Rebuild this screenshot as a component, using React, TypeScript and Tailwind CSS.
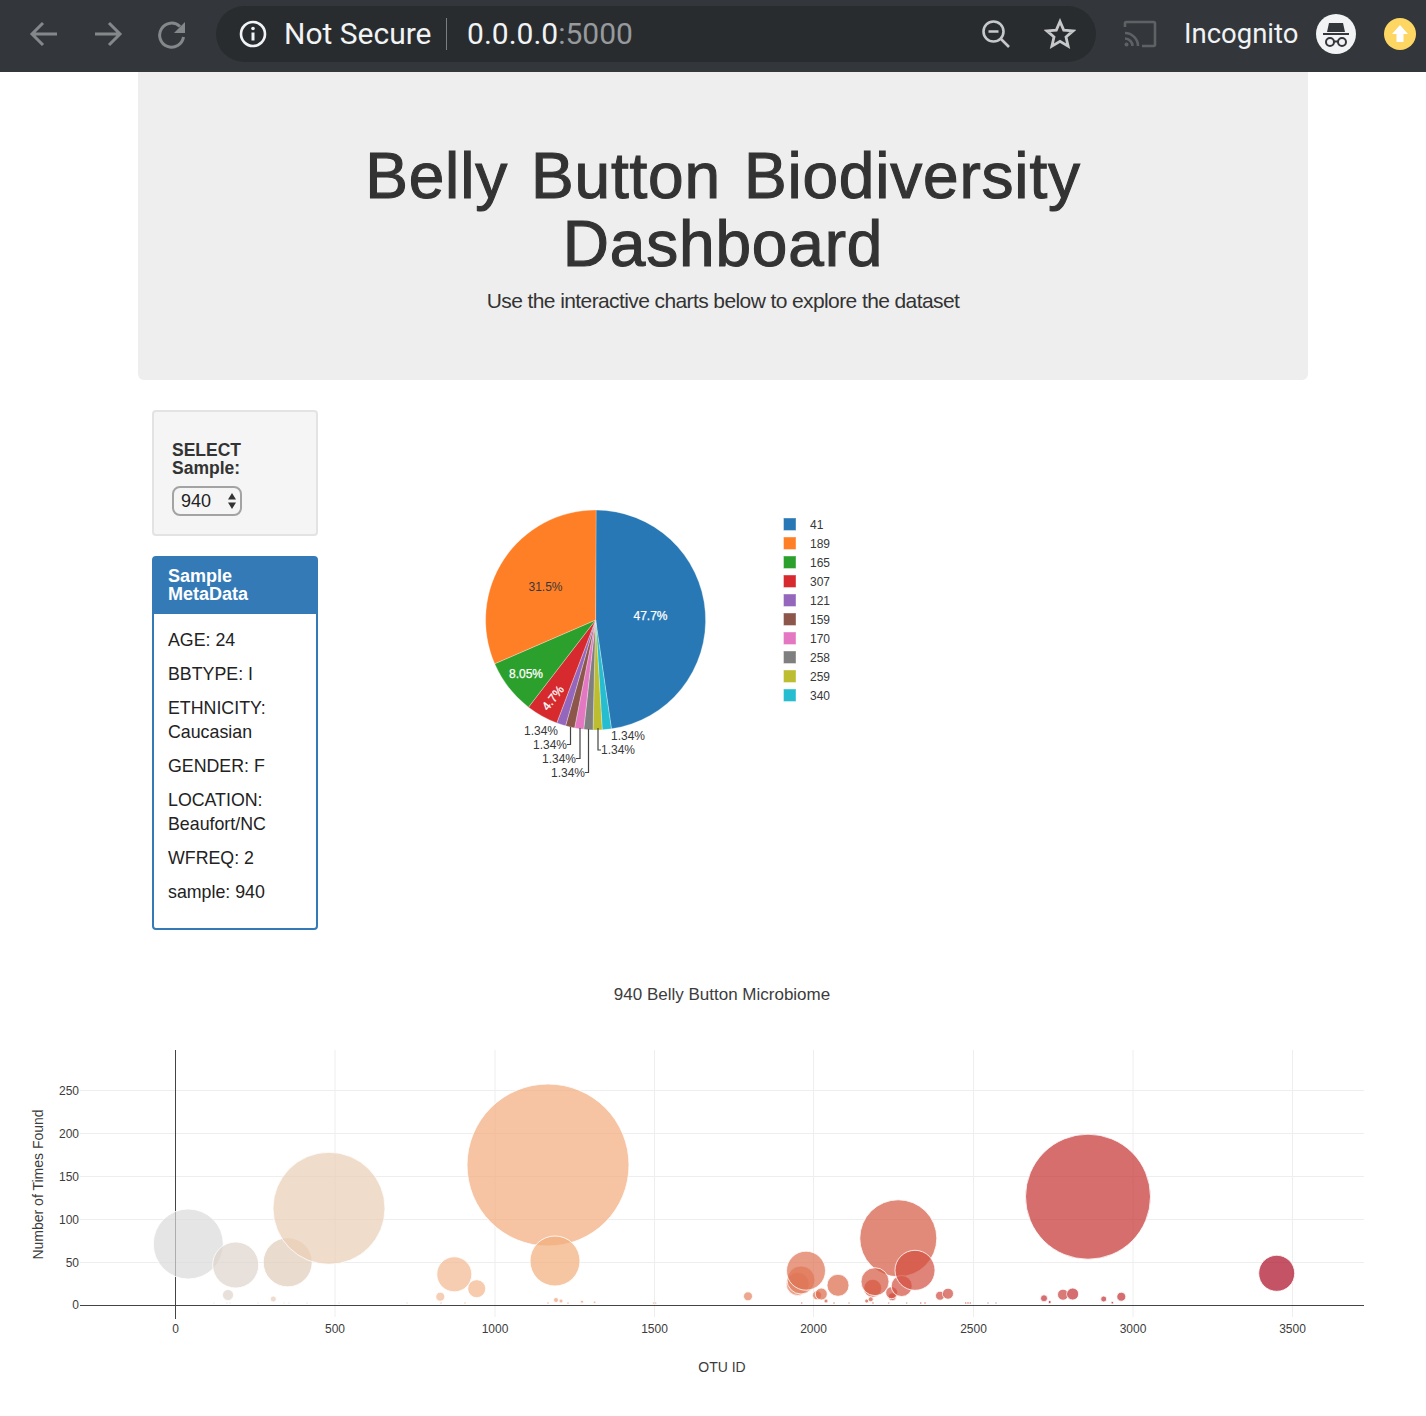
import React from "react";

const sans = "font-['Liberation_Sans',Arial,sans-serif]";

const slices: [number, string][] = [
  [47.7, "#2878b5"],
  [1.34, "#26bdd0"],
  [1.34, "#bcbd30"],
  [1.34, "#7f7f7f"],
  [1.34, "#e377c2"],
  [1.34, "#8c564b"],
  [1.34, "#9467bd"],
  [4.7, "#d62a2e"],
  [8.05, "#2ca02c"],
  [31.6, "#ff7f27"],
];

const legend: [string, string][] = [
  ["41", "#2878b5"],
  ["189", "#ff7f27"],
  ["165", "#2ca02c"],
  ["307", "#d62a2e"],
  ["121", "#9467bd"],
  ["159", "#8c564b"],
  ["170", "#e377c2"],
  ["258", "#7f7f7f"],
  ["259", "#bcbd30"],
  ["340", "#26bdd0"],
];

function slicePaths() {
  const cx = 595.6, cy = 620, r = 110;
  let a = 0;
  return slices.map(([v, c]) => {
    const a0 = a;
    a += (v / 100) * Math.PI * 2;
    const x0 = cx + r * Math.sin(a0), y0 = cy - r * Math.cos(a0);
    const x1 = cx + r * Math.sin(a), y1 = cy - r * Math.cos(a);
    const large = a - a0 > Math.PI ? 1 : 0;
    return { d: `M${cx} ${cy}L${x0} ${y0}A${r} ${r} 0 ${large} 1 ${x1} ${y1}Z`, c };
  });
}

// x, y, r, visible colour
const bubbles: [number, number, number, string][] = [
  [188.3, 1244, 35, "#e5e5e5"],
  [235.7, 1265, 23, "#e8e0da"],
  [228, 1295, 5.5, "#e8e0da"],
  [273.3, 1299, 3, "#eddccf"],
  [287.7, 1262.3, 24.5, "#e9dccf"],
  [329, 1208.3, 56, "#f0dccb"],
  [440.3, 1296.7, 4.5, "#f6cdb5"],
  [454.3, 1274.3, 17.5, "#f6cdb0"],
  [476.7, 1288.7, 9, "#f6cbae"],
  [548, 1165, 81, "#f6c4a3"],
  [555, 1261, 25, "#f6c6a3"],
  [556, 1300, 2.5, "#f4bda0"],
  [561, 1301, 2, "#f4bda0"],
  [582, 1301.7, 1.5, "#f2b59a"],
  [594.7, 1302.3, 1.2, "#f2b59a"],
  [748, 1296.3, 4.5, "#eea78f"],
  [797.7, 1284, 11.5, "#eaa48e"],
  [801, 1280, 14, "#eaa48e"],
  [806, 1270.7, 19.5, "#e89c85"],
  [838, 1285.3, 11, "#e6957f"],
  [817, 1295.3, 4.5, "#e89880"],
  [821.3, 1294, 6, "#e6957f"],
  [826, 1301, 2, "#e08a78"],
  [898.3, 1238.3, 38.5, "#e28b7b"],
  [872.7, 1288.3, 9, "#e28b7b"],
  [875, 1281.7, 14, "#e28b7b"],
  [866.7, 1301, 2, "#e28b7b"],
  [870.7, 1299.3, 2.5, "#e28b7b"],
  [892.3, 1296.7, 4, "#dd7a70"],
  [891.7, 1292.7, 6, "#e08478"],
  [901.7, 1286, 10.5, "#e08478"],
  [915, 1270.3, 20, "#e08478"],
  [940, 1295.7, 4.5, "#dd8078"],
  [948, 1293.7, 5.5, "#dd8078"],
  [1044, 1298.3, 3.5, "#d56f70"],
  [1049.7, 1302, 1.5, "#d05060"],
  [1063, 1294.7, 5.5, "#d97a78"],
  [1072.7, 1294, 6, "#d56f70"],
  [1088, 1196.7, 62.5, "#d66f6f"],
  [1103.7, 1299, 3, "#d56f70"],
  [1112.3, 1302.7, 1.2, "#d05060"],
  [1121.3, 1296.7, 4.5, "#d56f70"],
  [1276.7, 1273.3, 18, "#c45566"],
];

const tiny: [number, string][] = [
  [214, "#f4ece6"], [227, "#f4ece6"], [230, "#f4ece6"], [258, "#f4ece6"], [284, "#f4ece6"], [289, "#f4ece6"],
  [307, "#f6e6da"], [339, "#f6e6da"], [407, "#f8dcc8"], [441, "#f6cdb0"], [465, "#f6cdb0"], [548, "#f4bda0"],
  [568, "#f4bda0"], [653.5, "#f0c0aa"], [655.7, "#f0c0aa"], [801.7, "#e89880"], [834, "#e6957f"], [849, "#ecb0a0"],
  [873, "#e28b7b"], [888.7, "#e8a596"], [906.7, "#e8a090"], [920.7, "#e08478"], [925, "#e08478"], [965.7, "#dd8078"],
  [968, "#dd8078"], [970.3, "#dd8078"], [988, "#e8a8a0"], [996, "#e8a8a0"],
];

// Bubbles are 70% opaque; turn the colour seen on white into the colour to paint.
function solid(hex: string) {
  const n = parseInt(hex.slice(1), 16);
  const f = (v: number) => Math.max(0, Math.round((v - 255 * 0.3) / 0.7));
  return `rgb(${f((n >> 16) & 255)},${f((n >> 8) & 255)},${f(n & 255)})`;
}

function Toolbar() {
  return (
    <div className="flex h-[72px] items-center bg-[#33373b] pb-[4px] font-['Roboto',sans-serif]">
      <svg className="ml-[29px] shrink-0" width="30" height="28" viewBox="0 0 30 28" fill="none" stroke="#85888b" strokeWidth="3">
        <path d="M28 14H4M14 3 3 14l11 11" />
      </svg>
      <svg className="ml-[34px] shrink-0" width="30" height="28" viewBox="0 0 30 28" fill="none" stroke="#85888b" strokeWidth="3">
        <path d="M2 14h24M16 3l11 11-11 11" />
      </svg>
      <svg className="ml-[34px] shrink-0" width="30" height="30" viewBox="0 0 30 30" fill="none">
        <path d="M23 7.5A12 12 0 1 0 26.5 18" stroke="#85888b" strokeWidth="3" />
        <path d="M28 3v11H17z" fill="#85888b" />
      </svg>
      <div className="ml-[29px] flex h-[56px] w-[880px] shrink-0 items-center rounded-full bg-[#292c2f]">
        <svg className="ml-[22px] shrink-0" width="30" height="30" viewBox="0 0 30 30" fill="none">
          <circle cx="15" cy="15" r="12" stroke="#f1f3f4" strokeWidth="2.6" />
          <path d="M15 13.5v8" stroke="#f1f3f4" strokeWidth="3" />
          <circle cx="15" cy="9.5" r="1.8" fill="#f1f3f4" />
        </svg>
        <span className="ml-[16px] text-[30px] leading-none text-[#f1f3f4]">Not Secure</span>
        <span className="ml-[14px] h-[32px] w-[1.5px] bg-[#7b7e81]" />
        <span className="ml-[20px] text-[30px] leading-none text-[#f1f3f4]">
          0.0.0.0<span className="text-[#979a9d]">:5000</span>
        </span>
        <svg className="ml-auto shrink-0" width="30" height="30" viewBox="0 0 30 30" fill="none" stroke="#c6c8ca" strokeWidth="2.6">
          <circle cx="12.5" cy="12.5" r="10" />
          <path d="M7.5 12.5h10M20 20l8 8" />
        </svg>
        <svg className="ml-[33px] mr-[20px] shrink-0" width="32" height="32" viewBox="0 0 32 32" fill="none" stroke="#c6c8ca" strokeWidth="2.8" strokeLinejoin="miter">
          <path d="M16 3.5l3.7 8.6 9.3.8-7 6.1 2.1 9.1L16 23.3l-8.1 4.8L10 19 3 12.9l9.3-.8z" />
        </svg>
      </div>
      <svg className="ml-[27px] shrink-0" width="34" height="28" viewBox="0 0 34 28" fill="none" stroke="#5f6265" strokeWidth="2.6">
        <path d="M2 7V3.500A1.500 1.500 0 0 1 3.500 2h27A1.500 1.500 0 0 1 32 3.500v21a1.500 1.500 0 0 1-1.500 1.500H19" />
        <path d="M2 13c7 0 13 6 13 13M2 18.500c4 0 7.500 3.500 7.500 7.500" />
        <circle cx="3.500" cy="24.500" r="2" fill="#5f6265" stroke="none" />
      </svg>
      <span className="ml-[27px] text-[27.5px] leading-none text-[#f1f3f4]">Incognito</span>
      <svg className="ml-[18px] shrink-0" width="40" height="40" viewBox="0 0 40 40">
        <circle cx="20" cy="20" r="20" fill="#f1f3f4" />
        <path d="M13 9h14l2 9H11z" fill="#33373b" />
        <path d="M7 19h26v2H7z" fill="#33373b" />
        <circle cx="14" cy="28" r="4" fill="none" stroke="#33373b" strokeWidth="2" />
        <circle cx="26" cy="28" r="4" fill="none" stroke="#33373b" strokeWidth="2" />
        <path d="M18 27.500h4" stroke="#33373b" strokeWidth="2" />
      </svg>
      <svg className="ml-[28px] shrink-0" width="32" height="32" viewBox="0 0 32 32">
        <circle cx="16" cy="16" r="16" fill="#fdd663" />
        <path d="M16 7l8 9h-4.500v8h-7v-8H8z" fill="#fff" />
      </svg>
    </div>
  );
}

function Sidebar() {
  return (
    <div className="ml-[14px] flex w-[166px] shrink-0 flex-col gap-[20px]">
      <div className="h-[126px] rounded border-2 border-[#e3e3e3] bg-[#f5f5f5] px-[18px] pt-[29px]">
        <div className="text-[17.5px] font-bold leading-[18px] text-[#333]">
          SELECT
          <br />
          Sample:
        </div>
        <div className="mt-[9px] flex h-[30px] w-[70px] items-center justify-between rounded-lg border-2 border-[#a3a3a3] pl-[7px] pr-[3px] text-[18px] text-[#222]">
          940
          <svg width="10" height="18" viewBox="0 0 10 18" fill="#333">
            <path d="M5 1l4 6.500H1zM5 17l4-6.500H1z" />
          </svg>
        </div>
      </div>
      <div className="h-[374px] rounded border-2 border-[#337ab7] bg-white">
        <div className="h-[56px] bg-[#337ab7] px-[14px] pt-[9px] text-[18px] font-bold leading-[18px] text-white">
          Sample
          <br />
          MetaData
        </div>
        <div className="flex flex-col gap-[10px] px-[14px] pt-[14px] text-[17.8px] leading-[24px] text-[#222]">
          <div>AGE: 24</div>
          <div>BBTYPE: I</div>
          <div>ETHNICITY: Caucasian</div>
          <div>GENDER: F</div>
          <div>LOCATION: Beaufort/NC</div>
          <div>WFREQ: 2</div>
          <div>sample: 940</div>
        </div>
      </div>
    </div>
  );
}

function PieChart() {
  const label = "#383838";
  return (
    <svg className="shrink-0" width="600" height="520" viewBox="318 410 600 520" fontSize="12" fontFamily="'Liberation Sans',Arial,sans-serif">
      {slicePaths().map((s) => (
        <path key={s.c} d={s.d} fill={s.c} stroke="#fff" strokeOpacity="0.6" strokeWidth="0.5" />
      ))}
      <text x="650.500" y="620" textAnchor="middle" fill="#fff" stroke="#fff" strokeWidth="0.25">47.7%</text>
      <text x="545.500" y="591" textAnchor="middle" fill={label}>31.5%</text>
      <text x="526" y="678" textAnchor="middle" fill="#fff" stroke="#fff" strokeWidth="0.25">8.05%</text>
      <text x="553" y="702" textAnchor="middle" fill="#fff" stroke="#fff" strokeWidth="0.25" transform="rotate(-52 553 698)">4.7%</text>
      <text x="524" y="735" fill={label}>1.34%</text>
      <text x="533" y="749" fill={label}>1.34%</text>
      <text x="542" y="763" fill={label}>1.34%</text>
      <text x="551" y="777" fill={label}>1.34%</text>
      <text x="601" y="754" fill={label}>1.34%</text>
      <text x="611" y="740" fill={label}>1.34%</text>
      <g fill="none" stroke="#444" strokeWidth="1.2">
        <path d="M570.500 727v17.500H567" />
        <path d="M580 728v30.500h-4" />
        <path d="M588.500 729v43.500H585" />
        <path d="M598 728v22h3" />
      </g>
      {legend.map(([name, c], i) => (
        <g key={name}>
          <rect x="783.500" y={518 + i * 19} width="12.500" height="12.500" fill={c} stroke="#fff" strokeOpacity="0.4" strokeWidth="1" />
          <text x="810" y={529 + i * 19} fill={label}>{name}</text>
        </g>
      ))}
    </svg>
  );
}

function BubbleChart() {
  const xTicks: [number, string][] = [
    [175.5, "0"], [335, "500"], [495, "1000"], [654.5, "1500"], [813.5, "2000"], [973.5, "2500"], [1133, "3000"], [1292.5, "3500"],
  ];
  const yTicks: [number, string][] = [
    [1090.5, "250"], [1133.5, "200"], [1176.5, "150"], [1219.5, "100"], [1262.5, "50"],
  ];
  return (
    <svg className="mt-[50px] block" width="1426" height="416" viewBox="0 980 1426 416" fontSize="12" fontFamily="'Liberation Sans',Arial,sans-serif" fill="#3c3c3c">
      <text x="722" y="1000" textAnchor="middle" fontSize="17">940 Belly Button Microbiome</text>
      <g stroke="#eeeeee" strokeWidth="1">
        {xTicks.slice(1).map(([x]) => (
          <line key={x} x1={x} x2={x} y1="1050" y2="1317" />
        ))}
        {yTicks.map(([y]) => (
          <line key={y} x1="80" x2="1364" y1={y} y2={y} />
        ))}
      </g>
      {xTicks.map(([x, t]) => (
        <text key={t} x={x} y="1333" textAnchor="middle">{t}</text>
      ))}
      {yTicks.map(([y, t]) => (
        <text key={t} x="79" y={y + 4} textAnchor="end">{t}</text>
      ))}
      <text x="79" y="1309" textAnchor="end">0</text>
      <text x="722" y="1372" textAnchor="middle" fontSize="14">OTU ID</text>
      <text transform="translate(42.500 1184.500) rotate(-90)" textAnchor="middle" fontSize="14">Number of Times Found</text>
      <line x1="175.500" x2="175.500" y1="1050" y2="1319" stroke="#444" strokeWidth="1" />
      <line x1="80" x2="1364" y1="1305.500" y2="1305.500" stroke="#444" strokeWidth="1" />
      {tiny.map(([x, c]) => (
        <circle key={x} cx={x} cy="1303" r="0.800" fill={solid(c)} fillOpacity="0.7" />
      ))}
      {bubbles.map(([x, y, r, c]) => (
        <circle key={`${x}-${y}`} cx={x} cy={y} r={r} fill={solid(c)} fillOpacity="0.7" stroke="#fff" strokeWidth="1" strokeOpacity="0.8" />
      ))}
    </svg>
  );
}

export default function App() {
  return (
    <div className={`w-full overflow-hidden bg-white ${sans}`}>
      <Toolbar />
      <div className="ml-[138px] w-[1170px]">
        <div className="h-[308px] rounded-b-md bg-[#eeeeee] pt-[70px] text-center text-[#333]">
          <h1 className="text-[64px] font-normal leading-[68px] tracking-[0.8px] [word-spacing:4.5px] [-webkit-text-stroke:1.1px_#333]">
            Belly Button Biodiversity
            <br />
            Dashboard
          </h1>
          <p className="mt-[8px] text-[21px] leading-[30px] tracking-[-0.6px]">Use the interactive charts below to explore the dataset</p>
        </div>
        <div className="mt-[30px] flex">
          <Sidebar />
          <PieChart />
        </div>
      </div>
      <BubbleChart />
    </div>
  );
}
